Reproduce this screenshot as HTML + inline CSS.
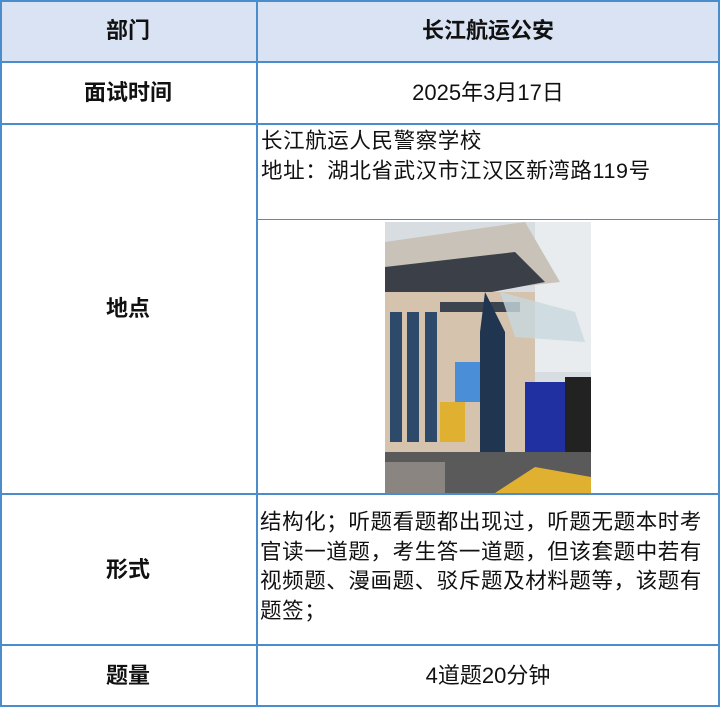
<!DOCTYPE html>
<html><head><meta charset="utf-8"><style>
*{margin:0;padding:0;box-sizing:border-box}
body{width:720px;height:707px;background:#fff;position:relative;overflow:hidden;font-family:"Liberation Sans","Noto Sans CJK SC",sans-serif;color:#111}
.a{position:absolute}
.hl{position:absolute;height:2px;background:#4a8ccc}
.vl{position:absolute;width:2px;background:#4a8ccc}
.c{position:absolute;text-align:center;font-size:22px;line-height:26px}
.b{font-weight:bold}
.t{position:absolute;font-size:21.5px;line-height:29.5px;letter-spacing:0.6px}
</style></head><body>
<div class="a" style="left:0;top:0;width:720px;height:62px;background:#dae3f3"></div>
<div class="hl" style="left:0;top:0;width:720px"></div>
<div class="hl" style="left:0;top:61px;width:720px"></div>
<div class="hl" style="left:0;top:123px;width:720px"></div>
<div class="hl" style="left:256px;top:219px;width:464px;height:1px"></div>
<div class="hl" style="left:0;top:493px;width:720px"></div>
<div class="hl" style="left:0;top:644px;width:720px"></div>
<div class="hl" style="left:0;top:705px;width:720px"></div>
<div class="vl" style="left:0;top:0;height:707px"></div>
<div class="vl" style="left:256px;top:0;height:707px"></div>
<div class="vl" style="left:718px;top:0;height:707px"></div>

<div class="c b" style="left:0;width:256px;top:18px">部门</div>
<div class="c b" style="left:256px;width:464px;top:18px">长江航运公安</div>
<div class="c b" style="left:0;width:256px;top:80px">面试时间</div>
<div class="c" style="left:256px;width:464px;top:80px">2025年3月17日</div>
<div class="t" style="left:261px;top:127px">长江航运人民警察学校<br>地址：湖北省武汉市江汉区新湾路119号</div>
<div class="c b" style="left:0;width:256px;top:296px">地点</div>
<div class="c b" style="left:0;width:256px;top:557px">形式</div>
<div class="t" style="left:260px;top:508px;width:458px">结构化；听题看题都出现过，听题无题本时考官读一道题，考生答一道题，但该套题中若有视频题、漫画题、驳斥题及材料题等，该题有题签；</div>
<div class="c b" style="left:0;width:256px;top:663px">题量</div>
<div class="c" style="left:256px;width:464px;top:663px">4道题20分钟</div>

<svg class="a" style="left:385px;top:222px" width="206" height="271" viewBox="0 0 206 271">
<rect width="206" height="271" fill="#d8dde2"/>
<rect x="150" y="0" width="56" height="150" fill="#e8ecef"/>
<polygon points="0,20 140,0 175,60 0,80" fill="#c8c2b8"/>
<polygon points="0,45 130,30 160,60 0,90" fill="#3a3f48"/>
<rect x="0" y="70" width="150" height="160" fill="#d6c3ad"/>
<rect x="5" y="90" width="12" height="130" fill="#2d4a6a"/>
<rect x="22" y="90" width="12" height="130" fill="#2d4a6a"/>
<rect x="40" y="90" width="12" height="130" fill="#2d4a6a"/>
<rect x="55" y="80" width="80" height="10" fill="#3c4450"/>
<polygon points="100,70 120,110 120,230 95,230 95,110" fill="#1f3550"/>
<polygon points="115,70 190,90 200,120 130,115" fill="#c8d8de" opacity=".8"/>
<rect x="70" y="140" width="25" height="40" fill="#4a8ed8"/>
<rect x="55" y="180" width="25" height="40" fill="#e0b030"/>
<rect x="140" y="160" width="40" height="80" fill="#2030a0"/>
<rect x="180" y="155" width="26" height="90" fill="#222"/>
<rect x="0" y="230" width="206" height="41" fill="#5a5a5a"/>
<polygon points="110,271 150,245 206,255 206,271" fill="#e0b030"/>
<rect x="0" y="240" width="60" height="31" fill="#8a8580"/>
</svg>
</body></html>
